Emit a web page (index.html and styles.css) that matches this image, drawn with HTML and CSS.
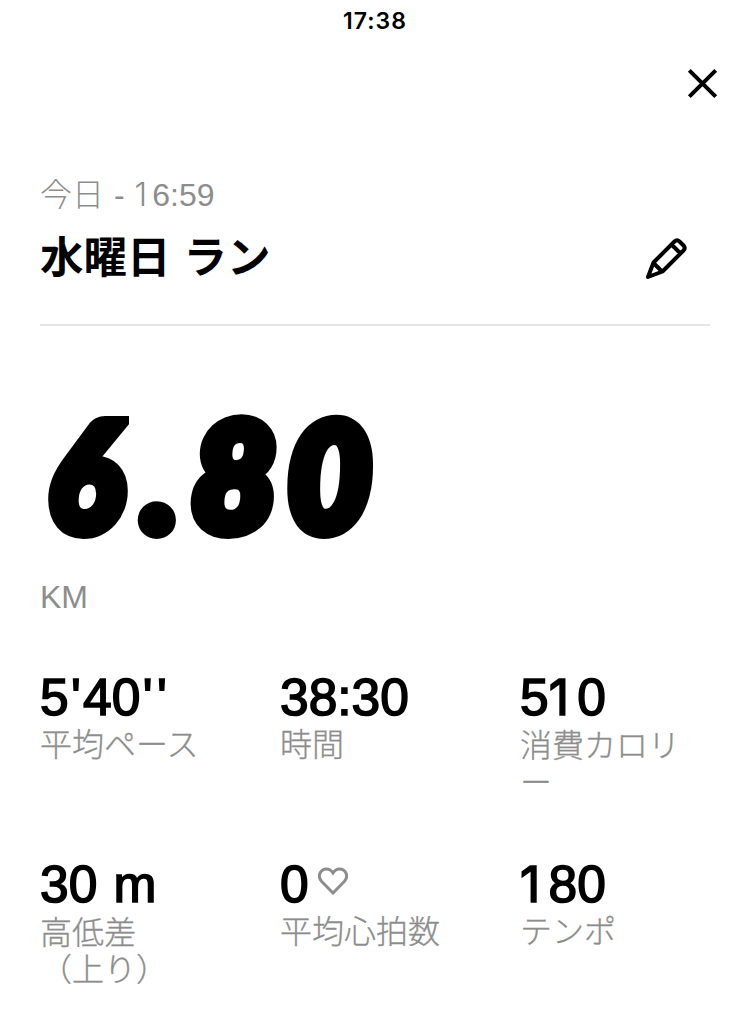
FILE: index.html
```html
<!DOCTYPE html>
<html lang="ja">
<head>
<meta charset="utf-8">
<title>水曜日 ラン</title>
<link rel="stylesheet" href="styles.css">
</head>
<body>
<div class="status">17:38</div>
<nav class="nav">
  <svg class="close" width="32" height="32" viewBox="0 0 32 32"><path d="M3.300 3.300 29.700 29.700M29.700 3.300 3.300 29.700"/></svg>
</nav>
<main class="run">
  <header class="heading">
    <div>
      <div class="date">今日 - <span class="one">1</span>6:59</div>
      <h1 class="title">水曜日 ラン</h1>
    </div>
    <svg class="edit" width="44" height="44" viewBox="0 0 44 44"><path d="M4 40 9.500 25.500 30.500 4.500Q33 2 35.500 4.500L39.500 8.500Q42 11 39.500 13.500L18.500 34.500ZM27.500 7.500 36.500 16.500M9.500 26 18 34.500"/></svg>
  </header>
  <section class="distance">
    <div class="number"><span class="six">6</span><span class="point">.</span><span class="eight">8</span><span class="zero">0</span></div>
    <div class="unit">KM</div>
  </section>
  <section class="stats">
    <div class="stat"><div class="value"><span>5<span class="tick">'</span>40<span class="tick">'</span><span class="tick">'</span></span></div><div class="label">平均ペース</div></div>
    <div class="stat"><div class="value">38:30</div><div class="label">時間</div></div>
    <div class="stat"><div class="value"><span>5<span class="one">1</span>0</span></div><div class="label two-line">消費カロリ<br>ー</div></div>
    <div class="stat"><div class="value">30 m</div><div class="label two-line">高低差<br>（上り）</div></div>
    <div class="stat"><div class="value">0<svg class="heart" width="30" height="28" viewBox="0 0 30 28"><path d="M15 26 3.700 14.600C-1.500 8.500 3 2 8.500 2Q12.500 2 15 6Q17.500 2 21.500 2C27 2 31.500 8.500 26.300 14.600Z"/></svg></div><div class="label">平均心拍数</div></div>
    <div class="stat"><div class="value"><span><span class="one">1</span>80</span></div><div class="label">テンポ</div></div>
  </section>
</main>
</body>
</html>
```
FILE: styles.css
```css
* { box-sizing: border-box; }
body {
  margin: 0;
  background: #fff;
  color: #000;
  font-family: "Liberation Sans", "Noto Sans CJK JP", sans-serif;
}
.status {
  height: 42px;
  text-align: center;
  font: 600 23px/42px Inter, sans-serif;
  letter-spacing: 1px;
}
.nav {
  display: flex;
  justify-content: flex-end;
  padding: 25px 32px 0 0;
  height: 130px;
}
svg { fill: none; stroke: #000; display: block; }
.close { stroke-width: 4; }
.run { padding: 0 40px; }
.heading {
  display: flex;
  justify-content: space-between;
  height: 154px;
  border-bottom: 2px solid #e5e5e5;
}
.date, .unit, .label {
  color: #8d8d8d;
  font-size: 32px;
  font-weight: 300;
}
.date { line-height: 46px; word-spacing: 1px; }
.label { -webkit-text-stroke: 0.3px #8d8d8d; }
.title {
  margin: 8px 0 0;
  font-size: 43.5px;
  font-weight: 700;
  line-height: 64px;
  word-spacing: 1px;
}
.edit { margin: 65px 22px 0 0; stroke-width: 4; stroke-linejoin: round; }
.distance { height: 340px; padding-top: 60px; }
.number {
  display: flex;
  height: 179px;
  font: italic 900 149px/175px Lato, sans-serif;
  -webkit-text-stroke: 14px #000;
}
.number span { display: block; transform-origin: 0 50%; }
.six { width: 95px; padding-left: 9px; transform: scaleX(.93); }
.point { width: 50px; padding-left: 8px; }
.eight { width: 99px; padding-left: 7px; transform: scaleX(.98); }
.zero { padding-left: 4px; transform: scaleX(.96); }
.unit { margin-top: 12px; line-height: 40px; }
.stats {
  display: grid;
  grid-template-columns: 240px 240px 190px;
  grid-template-rows: 187px 165px;
}
.value {
  display: flex;
  align-items: center;
  gap: 10px;
  height: 61px;
  font-size: 51.5px;
  line-height: 62px;
  white-space: pre;
  word-spacing: 2px;
  -webkit-text-stroke: 1.6px #000;
}
.one {
  display: inline-block;
  width: .556em;
  font-family: Inter, sans-serif;
  line-height: 1;
}
.value .one { width: .572em; font-size: .97em; }
.tick { display: inline-block; width: .28em; text-align: center; }
.label { line-height: 37px; white-space: nowrap; }
.two-line { padding-top: 1px; }
.heart { stroke: #8d8d8d; stroke-width: 3; margin: -5px 0 0 -1px; }
```
